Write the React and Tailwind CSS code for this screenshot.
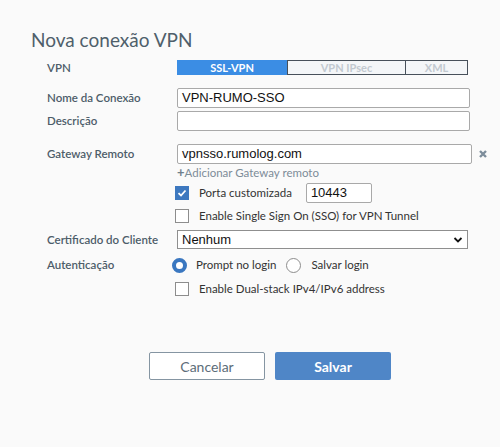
import React from 'react';

const label = "text-[11.5px] font-semibold text-[#4d5d69] font-['Lato',sans-serif]";
const body = "text-[11.5px] text-[#333] font-['Lato',sans-serif]";
const input = "h-[20px] border border-[#a9a9a9] rounded-[2px] bg-white px-[4px] text-[13px] text-[#111] font-['Liberation_Sans',Arial,sans-serif] leading-[18px]";

function Check({ on }) {
  return on ? (
    <span className="w-[14px] h-[14px] bg-[#3d78bf] flex items-center justify-center shrink-0">
      <svg width="10" height="10" viewBox="0 0 10 10"><path d="M1.5 5.2 4 7.5 8.5 2.5" fill="none" stroke="#fff" strokeWidth="1.8" /></svg>
    </span>
  ) : (
    <span className="w-[14px] h-[14px] border border-[#8d8d8d] bg-white shrink-0" />
  );
}

function Radio({ on }) {
  return on ? (
    <span className="block w-[15px] h-[15px] rounded-full border-[4px] border-[#3a77c0] bg-white shrink-0" />
  ) : (
    <span className="block w-[15px] h-[15px] rounded-full border border-[#8d8d8d] bg-white shrink-0" />
  );
}

function Row({ name, className = '', children }) {
  return (
    <div className={`flex items-center ${className}`}>
      <div className={`w-[177px] pl-[47px] shrink-0 whitespace-nowrap ${label}`}>{name}</div>
      <div className="flex-1 min-w-0 flex items-center">{children}</div>
    </div>
  );
}

export default function App() {
  return (
    <div className="w-[500px] h-[447px] bg-[#fafafa] overflow-hidden">
      <h1 className="pt-[28px] pl-[31px] text-[19px] leading-[24px] text-[#4f5f6b] font-['Lato',sans-serif]">Nova conexão VPN</h1>

      <Row name="VPN" className="mt-[8px] h-[15px]">
        <div className="flex h-[15px] text-[11px] font-bold font-['Lato',sans-serif] leading-[13px]">
          <span className="w-[110px] bg-[#3b8de4] text-white flex items-center justify-center">SSL-VPN</span>
          <span className="w-[119px] bg-[#f4f6f8] border border-[#47505a] text-[#c2c9d0] flex items-center justify-center">VPN IPsec</span>
          <span className="w-[62px] bg-[#f4f6f8] border border-[#47505a] border-l-0 text-[#c2c9d0] flex items-center justify-center">XML</span>
        </div>
      </Row>

      <Row name="Nome da Conexão" className="mt-[13px] h-[20px]">
        <div className={`w-[293px] ${input}`}>VPN-RUMO-SSO</div>
      </Row>
      <Row name="Descrição" className="mt-[3px] h-[20px]">
        <div className={`w-[293px] ${input}`}></div>
      </Row>

      <Row name="Gateway Remoto" className="mt-[13px] h-[20px]">
        <div className={`w-[295px] ${input}`}>vpnsso.rumolog.com</div>
        <svg className="ml-[6px]" width="10" height="10" viewBox="0 0 10 10"><path d="M2 2 8 8M8 2 2 8" stroke="#7d8d9b" strokeWidth="2.4" /></svg>
      </Row>
      <Row name="" className="h-[18px]">
        <span className="text-[11.5px] text-[#7d8c98] font-['Lato',sans-serif]"><span className="font-bold text-[13px] text-[#6f7f8c]">+</span>Adicionar Gateway remoto</span>
      </Row>
      <Row name="" className="mt-[1px] h-[20px]">
        <div className="flex items-center -ml-[2px]">
          <Check on />
          <span className={`ml-[10px] ${body}`}>Porta customizada</span>
          <div className={`ml-[14px] w-[66px] ${input}`}>10443</div>
        </div>
      </Row>
      <Row name="" className="mt-[3px] h-[20px]">
        <div className="flex items-center -ml-[2px]">
          <Check />
          <span className={`ml-[10px] ${body}`}>Enable Single Sign On (SSO) for VPN Tunnel</span>
        </div>
      </Row>

      <Row name="Certificado do Cliente" className="mt-[4px] h-[19px]">
        <div className="w-[291px] h-[19px] border border-[#8f8f8f] bg-white flex items-center justify-between px-[4px] text-[13px] text-[#111] font-['Liberation_Sans',Arial,sans-serif]">
          <span>Nenhum</span>
          <svg width="10" height="8" viewBox="0 0 10 8"><path d="M1.5 2 5 5.5 8.5 2" fill="none" stroke="#111" strokeWidth="1.8" /></svg>
        </div>
      </Row>

      <Row name="Autenticação" className="mt-[6px] h-[20px]">
        <div className="flex items-center -ml-[5px]">
          <Radio on />
          <span className={`ml-[9px] ${body}`}>Prompt no login</span>
          <span className="ml-[10px]"><Radio /></span>
          <span className={`ml-[10px] ${body}`}>Salvar login</span>
        </div>
      </Row>
      <Row name="" className="mt-[4px] h-[20px]">
        <div className="flex items-center -ml-[2px]">
          <Check />
          <span className={`ml-[10px] ${body}`}>Enable Dual-stack IPv4/IPv6 address</span>
        </div>
      </Row>

      <div className="mt-[53px] flex justify-center gap-[10px] pl-[40px]">
        <button className="w-[116px] h-[28px] bg-white border border-[#8595a2] rounded-[2px] text-[14px] text-[#5d6d79] font-['Lato',sans-serif]">Cancelar</button>
        <button className="w-[116px] h-[28px] bg-[#4f86c7] rounded-[2px] text-[14px] font-bold text-white font-['Lato',sans-serif]">Salvar</button>
      </div>
    </div>
  );
}
